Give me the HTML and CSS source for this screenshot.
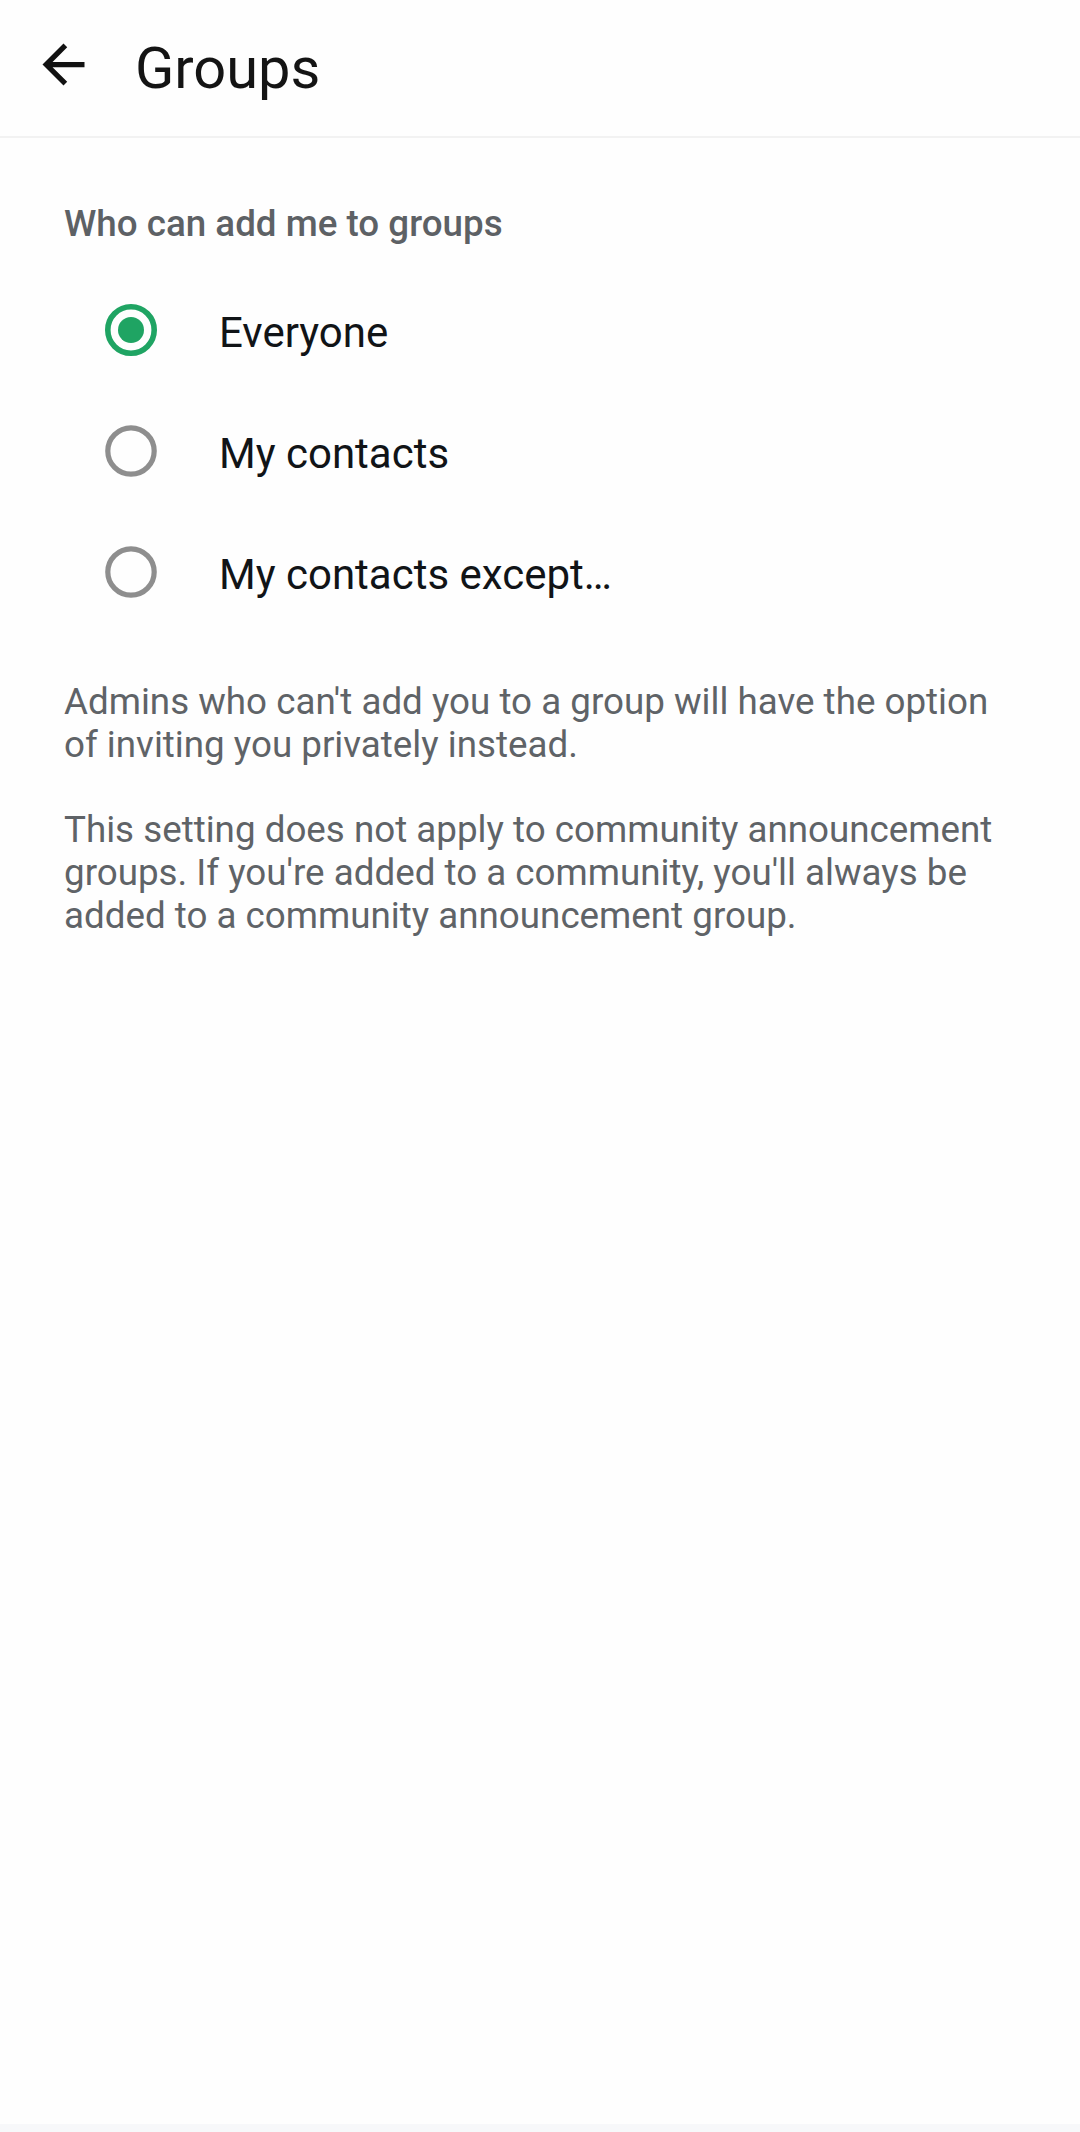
FILE: index.html
```html
<!DOCTYPE html>
<html lang="en">
<head>
<meta charset="utf-8">
<title>Groups</title>
<link rel="stylesheet" href="styles.css">
</head>
<body>
<div class="screen">
  <header class="toolbar">
    <button class="back" aria-label="Back">
      <svg viewBox="0 0 24 24" width="63" height="63"><path d="M20 11H7.83l5.59-5.59L12 4l-8 8 8 8 1.41-1.41L7.83 13H20v-2z" fill="#121212"/></svg>
    </button>
    <h1 class="title">Groups</h1>
  </header>
  <main class="content">
    <h2 class="section-label">Who can add me to groups</h2>
    <ul class="options">
      <li class="option">
        <svg class="radio" viewBox="0 0 52 52" width="52" height="52"><circle cx="26" cy="26" r="23.2" fill="none" stroke="#1fa463" stroke-width="5.6"/><circle cx="26" cy="26" r="13" fill="#1fa463"/></svg>
        <span class="option-text">Everyone</span>
      </li>
      <li class="option">
        <svg class="radio" viewBox="0 0 52 52" width="52" height="52"><circle cx="26" cy="26" r="23.2" fill="none" stroke="#8e8e8e" stroke-width="5.2"/></svg>
        <span class="option-text">My contacts</span>
      </li>
      <li class="option">
        <svg class="radio" viewBox="0 0 52 52" width="52" height="52"><circle cx="26" cy="26" r="23.2" fill="none" stroke="#8e8e8e" stroke-width="5.2"/></svg>
        <span class="option-text">My contacts except…</span>
      </li>
    </ul>
    <p class="note">Admins who can't add you to a group will have the option of inviting you privately instead.</p>
    <p class="note">This setting does not apply to community announcement groups. If you're added to a community, you'll always be added to a community announcement group.</p>
  </main>
  <div class="navbar"></div>
</div>
</body>
</html>
```
FILE: styles.css
```css
* { box-sizing: border-box; }
html, body { margin: 0; padding: 0; }
body {
  background: #fefefe;
  font-family: Roboto, "Noto Sans", "Liberation Sans", sans-serif;
}
.screen {
  display: flex;
  flex-direction: column;
  min-height: 2132px;
}
.toolbar {
  display: flex;
  align-items: center;
  height: 138px;
  border-bottom: 2px solid #f2f2f2;
  padding-left: 32px;
  background: #fefefe;
}
.back {
  display: flex;
  width: 63px;
  height: 63px;
  padding: 0;
  border: 0;
  background: none;
  margin-bottom: 7px;
}
.title {
  margin: 2px 0 0 40px;
  font-size: 57.75px;
  font-weight: 400;
  color: #141414;
  line-height: 1.172;
}
.content {
  flex: 1;
  padding: 64px 64px 0 64px;
}
.section-label {
  margin: 0;
  font-size: 36.75px;
  font-weight: 500;
  color: #5d6165;
  line-height: 43px;
}
.options {
  list-style: none;
  margin: 24px 0 0 0;
  padding: 0;
}
.option {
  display: flex;
  align-items: center;
  height: 121px;
  padding-left: 41px;
}
.radio { flex: none; }
.option-text {
  margin-left: 62px;
  padding-top: 6px;
  font-size: 42px;
  color: #111417;
  line-height: 1.172;
}
.note {
  margin: 0;
  font-size: 36.75px;
  line-height: 43px;
  color: #5f6367;
}
.options + .note { margin-top: 48px; }
.note + .note { margin-top: 42px; }
.navbar {
  height: 8px;
  background: #f7f8fa;
}
```
